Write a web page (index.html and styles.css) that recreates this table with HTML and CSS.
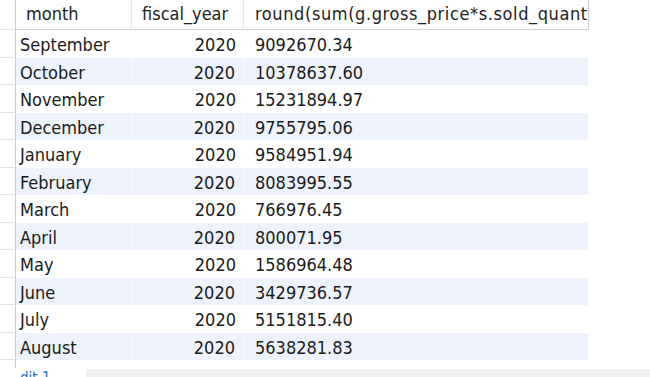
FILE: index.html
```html
<!DOCTYPE html>
<html>
<head>
<meta charset="utf-8">
<link rel="stylesheet" href="styles.css">
</head>
<body>
<div class="page">
  <div class="grid">
    <div class="row head">
      <div class="gutter"></div>
      <div class="cell c-month">month</div>
      <div class="cell c-year">fiscal_year</div>
      <div class="cell c-val">round(sum(g.gross_price*s.sold_quant</div>
    </div>
    <div class="row"><div class="gutter"></div><div class="cell c-month">September</div><div class="cell c-year">2020</div><div class="cell c-val">9092670.34</div></div>
    <div class="row alt"><div class="gutter"></div><div class="cell c-month">October</div><div class="cell c-year">2020</div><div class="cell c-val">10378637.60</div></div>
    <div class="row"><div class="gutter"></div><div class="cell c-month">November</div><div class="cell c-year">2020</div><div class="cell c-val">15231894.97</div></div>
    <div class="row alt"><div class="gutter"></div><div class="cell c-month">December</div><div class="cell c-year">2020</div><div class="cell c-val">9755795.06</div></div>
    <div class="row"><div class="gutter"></div><div class="cell c-month">January</div><div class="cell c-year">2020</div><div class="cell c-val">9584951.94</div></div>
    <div class="row alt"><div class="gutter"></div><div class="cell c-month">February</div><div class="cell c-year">2020</div><div class="cell c-val">8083995.55</div></div>
    <div class="row"><div class="gutter"></div><div class="cell c-month">March</div><div class="cell c-year">2020</div><div class="cell c-val">766976.45</div></div>
    <div class="row alt"><div class="gutter"></div><div class="cell c-month">April</div><div class="cell c-year">2020</div><div class="cell c-val">800071.95</div></div>
    <div class="row"><div class="gutter"></div><div class="cell c-month">May</div><div class="cell c-year">2020</div><div class="cell c-val">1586964.48</div></div>
    <div class="row alt"><div class="gutter"></div><div class="cell c-month">June</div><div class="cell c-year">2020</div><div class="cell c-val">3429736.57</div></div>
    <div class="row"><div class="gutter"></div><div class="cell c-month">July</div><div class="cell c-year">2020</div><div class="cell c-val">5151815.40</div></div>
    <div class="row alt"><div class="gutter"></div><div class="cell c-month">August</div><div class="cell c-year">2020</div><div class="cell c-val">5638281.83</div></div>
    <div class="tail"><div class="gutter"></div></div>
  </div>
  <div class="footer">
    <div class="tab-label">dit 1</div>
    <div class="tab-bar"></div>
  </div>
</div>
</body>
</html>
```

FILE: styles.css
```css
html, body {
  margin: 0;
  padding: 0;
  background: #ffffff;
}

.page {
  width: 650px;
  height: 377px;
  overflow: hidden;
  font-family: "DejaVu Sans", "Liberation Sans", sans-serif;
  font-stretch: condensed;
  font-size: 18px;
  color: #1a1a1a;
}

.grid {
  display: flex;
  flex-direction: column;
}

.row {
  display: flex;
  height: 27.5px;
}

.gutter {
  width: 16px;
  flex: none;
  box-sizing: border-box;
  border-right: 1px solid #c8c8c8;
  border-bottom: 1px solid #e4e4e4;
}

.cell {
  flex: none;
  box-sizing: border-box;
  display: flex;
  align-items: center;
  white-space: nowrap;
  overflow: hidden;
  padding-top: 2px;
}

.c-month {
  width: 116px;
  padding-left: 4px;
}

.c-year {
  width: 112px;
  justify-content: flex-end;
  padding-right: 8px;
}

.c-val {
  width: 344px;
  padding-left: 11px;
}

.alt .cell {
  background: #eef2fa;
}

.alt .c-month,
.alt .c-year {
  border-right: 1px solid #f8f9fc;
}

.head {
  height: 30px;
}

.head .cell {
  border-bottom: 1px solid #d2d2d2;
  border-right: 1px solid #e6e6e6;
  color: #222222;
  padding-top: 0;
  padding-bottom: 2px;
  background: #ffffff;
}

.head .c-month {
  padding-left: 10px;
}

.head .c-year {
  justify-content: flex-start;
  padding-left: 10px;
  padding-right: 0;
}

.head .c-val {
  padding-left: 11px;
  border-right: 1px solid #c8c8c8;
  width: 345px;
  letter-spacing: 0.6px;
}

.tail {
  display: flex;
  height: 9px;
}

.tail .gutter {
  border-bottom: none;
  height: 8px;
}

.footer {
  display: flex;
  height: 8px;
  overflow: hidden;
}

.tab-label {
  width: 86px;
  flex: none;
  box-sizing: border-box;
  padding-left: 20px;
  color: #2f6fc4;
  font-size: 15px;
  line-height: 15px;
  margin-top: 2px;
}

.tab-bar {
  flex: 1;
  background: #efefef;
}
```
